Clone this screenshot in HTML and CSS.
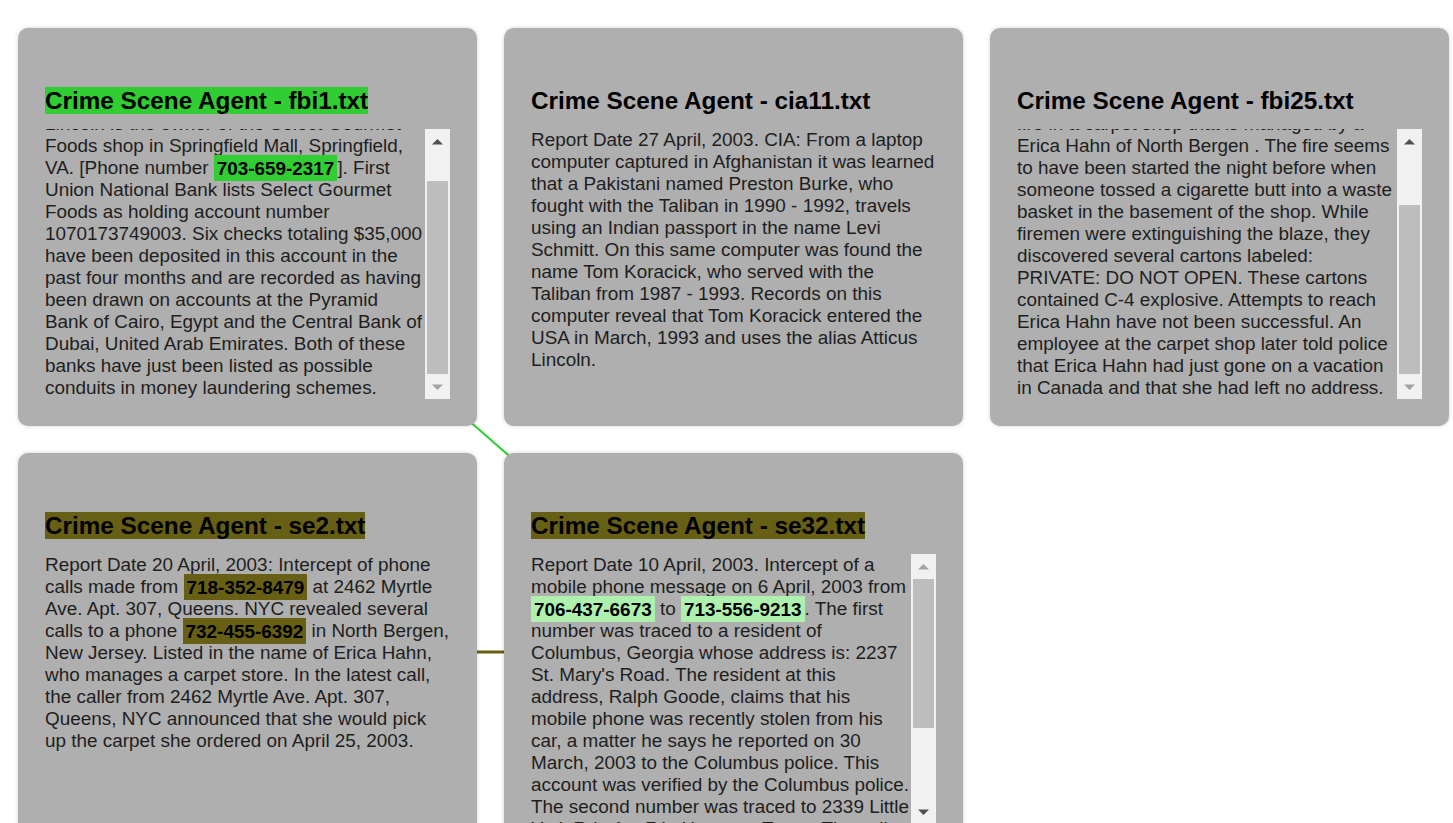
FILE: index.html
```html
<!DOCTYPE html>
<html lang="en">
<head>
<meta charset="utf-8">
<title>Crime Scene Agents</title>
<link rel="stylesheet" href="styles.css">
</head>
<body>
<main class="board">
  <svg class="links" width="1453" height="900" viewBox="0 0 1453 900" aria-hidden="true">
    <line class="link link-green" x1="247.5" y1="227" x2="733.5" y2="652"/>
    <line class="link link-olive" x1="247.5" y1="652" x2="733.5" y2="652"/>
  </svg>

  <section class="card">
    <h2 class="card-title"><span class="mark mark-green">Crime Scene Agent - fbi1.txt</span></h2>
    <div class="viewport">
      <div class="text-window at-bottom">
        <p class="report">Report Date 26 April, 2003. FBI: Atticus Lincoln is the owner of the Select Gourmet Foods shop in Springfield Mall, Springfield, VA. [Phone number <b class="phone phone-green">703-659-2317</b>]. First Union National Bank lists Select Gourmet Foods as holding account number 1070173749003. Six checks totaling $35,000 have been deposited in this account in the past four months and are recorded as having been drawn on accounts at the Pyramid Bank of Cairo, Egypt and the Central Bank of Dubai, United Arab Emirates. Both of these banks have just been listed as possible conduits in money laundering schemes.</p>
      </div>
      <div class="scrollbar">
        <div class="sb-btn"><svg width="11" height="6" viewBox="0 0 11 6"><polygon class="arrow on" points="0,5.5 5.5,0 11,5.5"/></svg></div>
        <div class="sb-track at-end"><div class="sb-thumb" style="height:193px"></div></div>
        <div class="sb-btn"><svg width="11" height="6" viewBox="0 0 11 6"><polygon class="arrow off" points="0,0.5 5.5,6 11,0.5"/></svg></div>
      </div>
    </div>
  </section>

  <section class="card">
    <h2 class="card-title"><span class="mark">Crime Scene Agent - cia11.txt</span></h2>
    <div class="viewport">
      <div class="text-window">
        <p class="report">Report Date 27 April, 2003. CIA: From a laptop computer captured in Afghanistan it was learned that a Pakistani named Preston Burke, who fought with the Taliban in 1990 - 1992, travels using an Indian passport in the name Levi Schmitt. On this same computer was found the name Tom Koracick, who served with the Taliban from 1987 - 1993. Records on this computer reveal that Tom Koracick entered the USA in March, 1993 and uses the alias Atticus Lincoln.</p>
      </div>
    </div>
  </section>

  <section class="card">
    <h2 class="card-title"><span class="mark">Crime Scene Agent - fbi25.txt</span></h2>
    <div class="viewport">
      <div class="text-window at-bottom">
        <p class="report">Report Date 25 April, 2003. FBI: On 24 April, 2003 the North Bergen, NJ Fire Department responded to a late night alarm regarding a fire in a carpet shop that is managed by a Erica Hahn of North Bergen . The fire seems to have been started the night before when someone tossed a cigarette butt into a waste basket in the basement of the shop. While firemen were extinguishing the blaze, they discovered several cartons labeled: PRIVATE: DO NOT OPEN. These cartons contained C-4 explosive. Attempts to reach Erica Hahn have not been successful. An employee at the carpet shop later told police that Erica Hahn had just gone on a vacation in Canada and that she had left no address.</p>
      </div>
      <div class="scrollbar">
        <div class="sb-btn"><svg width="11" height="6" viewBox="0 0 11 6"><polygon class="arrow on" points="0,5.5 5.5,0 11,5.5"/></svg></div>
        <div class="sb-track at-end"><div class="sb-thumb" style="height:169px"></div></div>
        <div class="sb-btn"><svg width="11" height="6" viewBox="0 0 11 6"><polygon class="arrow off" points="0,0.5 5.5,6 11,0.5"/></svg></div>
      </div>
    </div>
  </section>

  <section class="card">
    <h2 class="card-title"><span class="mark mark-olive">Crime Scene Agent - se2.txt</span></h2>
    <div class="viewport">
      <div class="text-window">
        <p class="report">Report Date 20 April, 2003: Intercept of phone calls made from <b class="phone phone-olive">718-352-8479</b> at 2462 Myrtle Ave. Apt. 307, Queens. NYC revealed several calls to a phone <b class="phone phone-olive">732-455-6392</b> in North Bergen, New Jersey. Listed in the name of Erica Hahn, who manages a carpet store. In the latest call, the caller from 2462 Myrtle Ave. Apt. 307, Queens, NYC announced that she would pick up the carpet she ordered on April 25, 2003.</p>
      </div>
    </div>
  </section>

  <section class="card">
    <h2 class="card-title"><span class="mark mark-olive">Crime Scene Agent - se32.txt</span></h2>
    <div class="viewport">
      <div class="text-window">
        <p class="report">Report Date 10 April, 2003. Intercept of a mobile phone message on 6 April, 2003 from <b class="phone phone-light">706-437-6673</b> to <b class="phone phone-light">713-556-9213</b>. The first number was traced to a resident of Columbus, Georgia whose address is: 2237 St. Mary's Road. The resident at this address, Ralph Goode, claims that his mobile phone was recently stolen from his car, a matter he says he reported on 30 March, 2003 to the Columbus police. This account was verified by the Columbus police. The second number was traced to 2339 Little York Rd., Apt 7 in Houston, Texas. The call was made to a residence rented by a person who has not yet been identified by the Houston police.</p>
      </div>
      <div class="scrollbar">
        <div class="sb-btn"><svg width="11" height="6" viewBox="0 0 11 6"><polygon class="arrow off" points="0,5.5 5.5,0 11,5.5"/></svg></div>
        <div class="sb-track"><div class="sb-thumb" style="height:149px"></div></div>
        <div class="sb-btn"><svg width="11" height="6" viewBox="0 0 11 6"><polygon class="arrow on" points="0,0.5 5.5,6 11,0.5"/></svg></div>
      </div>
    </div>
  </section>
</main>
</body>
</html>
```

FILE: styles.css
```css
html, body {
  margin: 0;
  padding: 0;
  overflow: hidden;
  background: #ffffff;
}

body {
  font-family: "Liberation Sans", Arial, sans-serif;
  color: #1e1e1e;
}

.board {
  position: relative;
  display: grid;
  grid-template-columns: repeat(3, 459px);
  gap: 27px;
  padding: 28px 0 0 18px;
  width: 1453px;
  box-sizing: border-box;
}

.links {
  position: absolute;
  left: 0;
  top: 0;
  z-index: 0;
  pointer-events: none;
}

.link-green {
  stroke: #32cd32;
  stroke-width: 2;
}

.link-olive {
  stroke: #675f14;
  stroke-width: 3;
}

.card {
  position: relative;
  z-index: 1;
  height: 398px;
  box-sizing: border-box;
  padding: 59px 27px 0 27px;
  background: #afafaf;
  border-radius: 10px;
  box-shadow: 0 0 4px rgba(0, 0, 0, 0.18);
}

.card-title {
  margin: 0 0 14px 0;
  font-size: 24.3px;
  line-height: 28px;
  font-weight: bold;
  color: #000000;
}

.mark-green {
  background: #32cd32;
}

.mark-olive {
  background: #675f14;
}

.viewport {
  display: flex;
  height: 270px;
}

.text-window {
  flex: 1;
  min-width: 0;
  overflow: hidden;
  display: flex;
  flex-direction: column;
  justify-content: flex-start;
}

.text-window.at-bottom {
  justify-content: flex-end;
}

.report {
  margin: 0;
  flex: none;
  font-size: 18.9px;
  line-height: 22px;
  color: #1e1e1e;
}

.phone {
  font-weight: bold;
  color: #000000;
  padding: 2.5px 3px;
}

.phone-green {
  background: #32cd32;
}

.phone-olive {
  background: #675f14;
}

.phone-light {
  background: #aef0ae;
}

.scrollbar {
  flex: none;
  width: 25px;
  display: flex;
  flex-direction: column;
  background: #f1f1f1;
}

.sb-btn {
  flex: none;
  height: 25px;
  display: flex;
  align-items: center;
  justify-content: center;
}

.sb-btn svg {
  display: block;
}

.arrow.on {
  fill: #505050;
}

.arrow.off {
  fill: #a3a3a3;
}

.sb-track {
  flex: 1;
  display: flex;
  flex-direction: column;
  justify-content: flex-start;
  padding: 0 2px;
}

.sb-track.at-end {
  justify-content: flex-end;
}

.sb-thumb {
  flex: none;
  background: #bdbdbd;
}
```
